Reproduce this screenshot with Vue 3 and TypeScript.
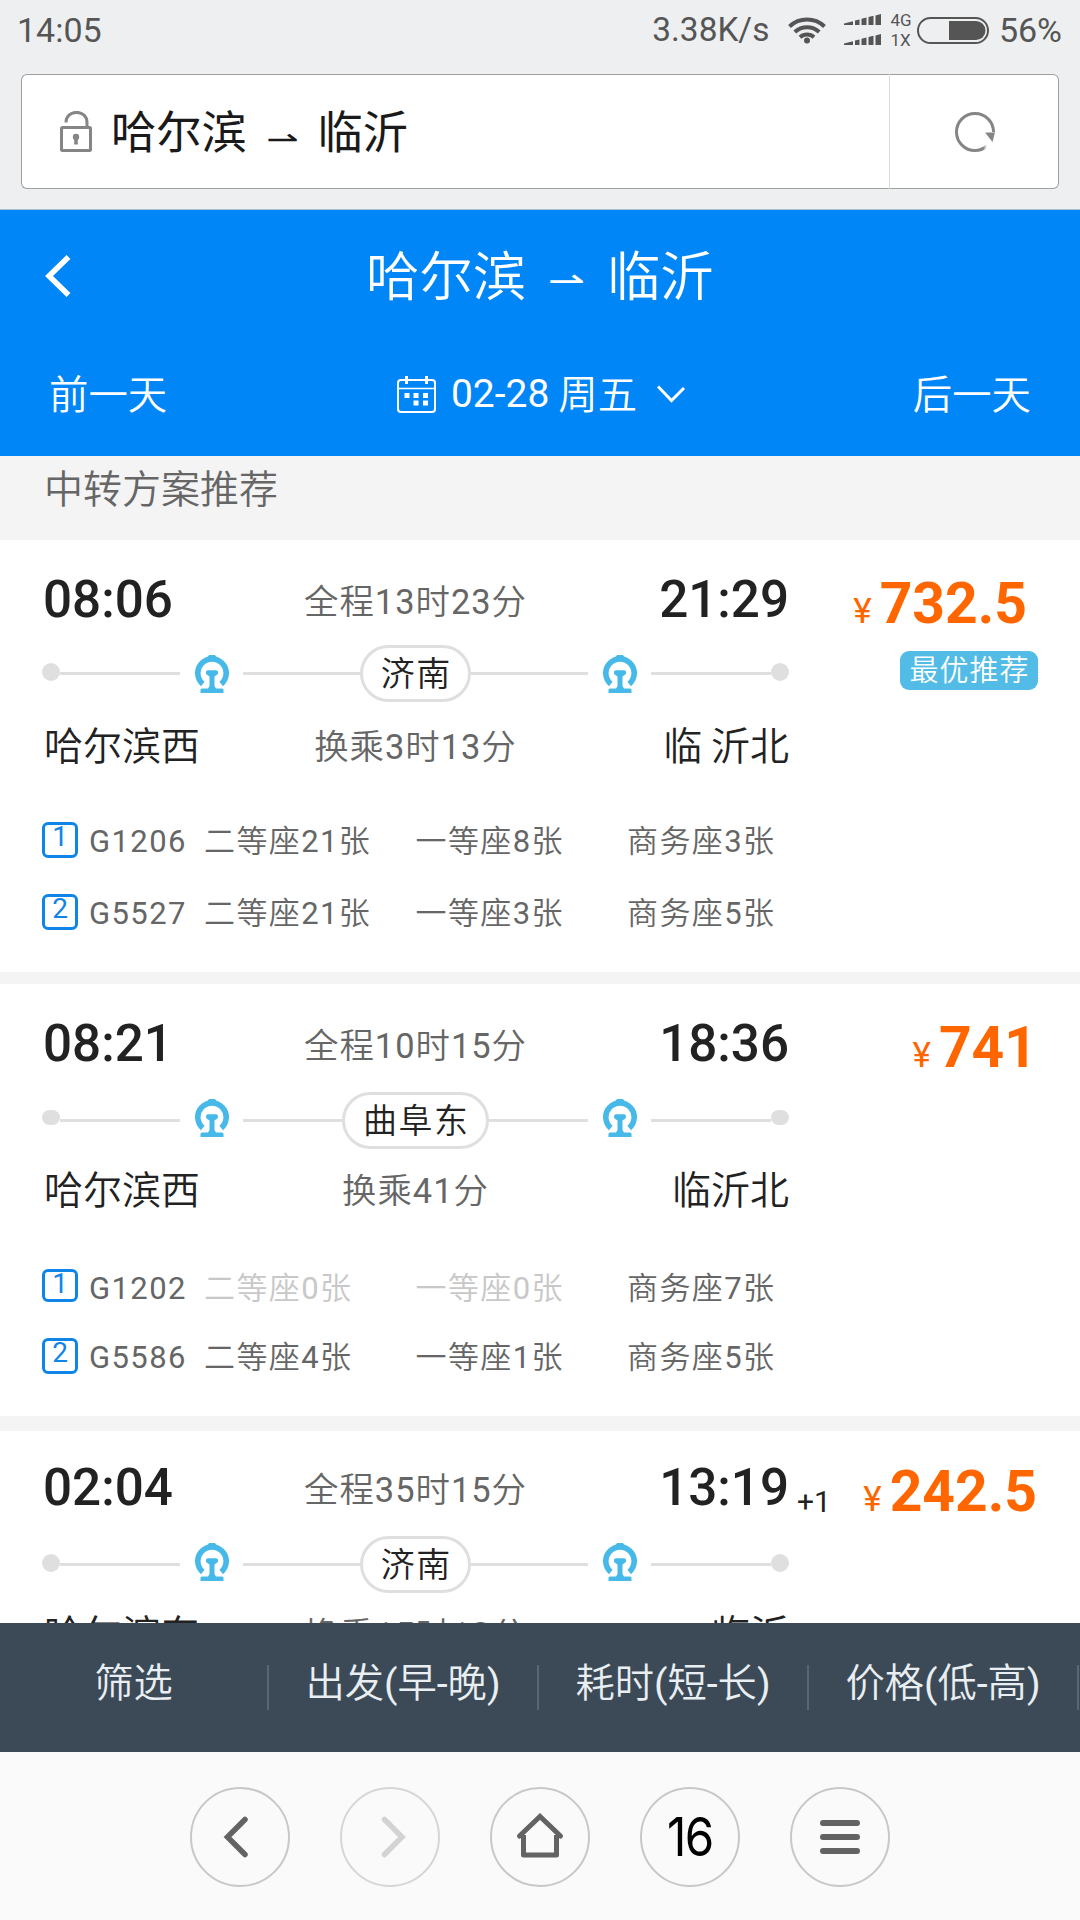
<script setup lang="ts">
interface Seat {
  label: string
  count: number
}

interface Leg {
  code: string
  seats: Seat[]
}

interface Plan {
  id: string
  depart: string
  arrive: string
  dayOffset?: string
  total: string
  via: string
  transfer: string
  from: string
  to: string
  price: string
  tag?: string
  legs: Leg[]
}

const seats = (second: number, first: number, business: number): Seat[] => [
  { label: '二等座', count: second },
  { label: '一等座', count: first },
  { label: '商务座', count: business },
]

const plans: Plan[] = [
  {
    id: 'p1',
    depart: '08:06',
    arrive: '21:29',
    total: '全程13时23分',
    via: '济南',
    transfer: '换乘3时13分',
    from: '哈尔滨西',
    to: '临 沂北',
    price: '732.5',
    tag: '最优推荐',
    legs: [
      { code: 'G1206', seats: seats(21, 8, 3) },
      { code: 'G5527', seats: seats(21, 3, 5) },
    ],
  },
  {
    id: 'p2',
    depart: '08:21',
    arrive: '18:36',
    total: '全程10时15分',
    via: '曲阜东',
    transfer: '换乘41分',
    from: '哈尔滨西',
    to: '临沂北',
    price: '741',
    legs: [
      { code: 'G1202', seats: seats(0, 0, 7) },
      { code: 'G5586', seats: seats(4, 1, 5) },
    ],
  },
  {
    id: 'p3',
    depart: '02:04',
    arrive: '13:19',
    dayOffset: '+1',
    total: '全程35时15分',
    via: '济南',
    transfer: '换乘15时13分',
    from: '哈尔滨东',
    to: '临沂',
    price: '242.5',
    legs: [],
  },
]

const filters = ['筛选', '出发(早-晚)', '耗时(短-长)', '价格(低-高)']
</script>

<template>
  <div class="screen">
    <div class="status">
      <span class="clock">14:05</span>
      <span class="speed">3.38K/s</span>
      <svg class="wifi" width="38" height="28" viewBox="0 0 38 28" fill="none" stroke="#555" stroke-width="4">
        <path d="M1.5 10.5a25.500 25.500 0 0 1 35 0" />
        <path d="M6.800 16a18 18 0 0 1 24.400 0" />
        <path d="M12 21.200a10.500 10.500 0 0 1 14 0" />
        <circle cx="19" cy="24.500" r="3" fill="#555" stroke="none" />
      </svg>
      <svg class="signal" width="38" height="32" viewBox="0 0 38 32" fill="#555">
        <path d="M0 11v-1.500l9-2.200V11zM11 11V6.500l4.500-1V11zM17.500 11V4.800l5-1.300V11zM24.500 11V3l5-1.200V11zM31.500 11V1.400L37 0v11z" />
        <path d="M0 31v-1.500l9-2.200V31zM11 31v-4.500l4.500-1V31zM17.500 31v-6.200l5-1.300V31zM24.500 31v-8l5-1.200V31zM31.500 31v-9.600L37 20v11z" />
      </svg>
      <span class="net"><span>4G</span><span>1X</span></span>
      <svg class="battery" width="72" height="27" viewBox="0 0 72 27">
        <rect x="1" y="1" width="70" height="25" rx="12.500" fill="none" stroke="#555" stroke-width="2" />
        <path d="M32 4h27a9.500 9.500 0 0 1 0 19H32z" fill="#555" />
      </svg>
      <span class="percent">56%</span>
    </div>

    <div class="address">
      <div class="url">
        <svg class="lock" width="32" height="41" viewBox="0 0 32 41" fill="none" stroke="#858585">
          <path d="M6 11.500C6 -2 27 -2 27 11.500V16" stroke-width="3" />
          <rect x="1.500" y="16.500" width="29" height="23" rx="1" stroke-width="3" />
          <circle cx="16" cy="26" r="3.200" fill="#858585" stroke="none" />
          <path d="M16 26v7.500" stroke-width="3.600" />
        </svg>
        <span class="url-text">哈尔滨</span>
        <span class="harpoon dark">⇀</span>
        <span class="url-text">临沂</span>
      </div>
      <div class="reload">
        <svg width="42" height="42" viewBox="0 0 42 42" fill="none">
          <defs>
            <linearGradient id="fade" x1="0" y1="0" x2="1" y2="0">
              <stop offset="0.700" stop-color="#858585" />
              <stop offset="1" stop-color="#858585" stop-opacity="0" />
            </linearGradient>
          </defs>
          <path d="M39.500 21A18.500 18.500 0 1 0 21 39.500" stroke="#858585" stroke-width="3" />
          <path d="M20.500 39.500A18.500 18.500 0 0 0 33 35" stroke="url(#fade)" stroke-width="3" />
          <path d="M31 21.500h10l-2.500 9.500z" fill="#858585" />
        </svg>
      </div>
    </div>

    <header class="header">
      <div class="title-row">
        <svg class="back" width="26" height="42" viewBox="0 0 26 42" fill="none" stroke="#fff" stroke-width="5.500">
          <path d="M23.500 2L4 21l19.500 19" />
        </svg>
        <div class="title">
          <span>哈尔滨</span>
          <span class="harpoon">⇀</span>
          <span>临沂</span>
        </div>
      </div>
      <div class="date-row">
        <span class="cjk">前一天</span>
        <div class="date">
          <svg width="40" height="37" viewBox="0 0 40 37" fill="none" stroke="#fff" stroke-width="2">
            <rect x="1" y="4" width="37" height="32" rx="3" />
            <path d="M1 12.500h37" stroke-width="1.600" />
            <path d="M9.500 0v8M29.500 0v8" stroke-width="3" />
            <path d="M7.500 19.500h5M16.500 19.500h5M26 19.500h5M16.500 27h5M26 27h5" stroke-width="5" />
          </svg>
          <span class="date-num">02-28</span>
          <span class="cjk week">周五</span>
          <svg class="caret" width="28" height="18" viewBox="0 0 28 18" fill="none" stroke="#fff" stroke-width="3">
            <path d="M1 1.500l13.500 14L27 3" />
          </svg>
        </div>
        <span class="cjk">后一天</span>
      </div>
    </header>

    <main class="list">
      <h2 class="section">中转方案推荐</h2>
      <article v-for="plan in plans" :key="plan.id" class="card" :class="plan.id">
        <div class="journey">
          <div class="head">
            <span class="time">{{ plan.depart }}</span>
            <span class="muted">{{ plan.total }}</span>
            <span class="time end">{{ plan.arrive }}</span>
          </div>
          <div class="track">
            <i class="dot" />
            <i class="line edge" />
            <svg class="train" width="34" height="38" viewBox="0 0 34 38" fill="#47b9e9">
              <path d="M7.800 29A14.200 14.200 0 1 1 26.200 29" fill="none" stroke="#47b9e9" stroke-width="5.600" />
              <path d="M14 0h6l3 4H11zM13 15.200h8a2 2 0 0 1 2 2v.800a2 2 0 0 1-1 1.700l-2.500 1.800V31l1.500 2.500H27a1.500 1.500 0 0 1 1.500 1.500V38h-23v-3A1.500 1.500 0 0 1 7 33.500h6l1.500-2.500V21.500L12 19.700a2 2 0 0 1-1-1.700v-.800a2 2 0 0 1 2-2z" />
            </svg>
            <i class="line" />
            <span class="via">{{ plan.via }}</span>
            <i class="line" />
            <svg class="train" width="34" height="38" viewBox="0 0 34 38" fill="#47b9e9">
              <path d="M7.800 29A14.200 14.200 0 1 1 26.200 29" fill="none" stroke="#47b9e9" stroke-width="5.600" />
              <path d="M14 0h6l3 4H11zM13 15.200h8a2 2 0 0 1 2 2v.800a2 2 0 0 1-1 1.700l-2.500 1.800V31l1.500 2.500H27a1.500 1.500 0 0 1 1.500 1.500V38h-23v-3A1.500 1.500 0 0 1 7 33.500h6l1.500-2.500V21.500L12 19.700a2 2 0 0 1-1-1.700v-.800a2 2 0 0 1 2-2z" />
            </svg>
            <i class="line edge" />
            <i class="dot" />
          </div>
          <div class="stations">
            <span class="station">{{ plan.from }}</span>
            <span class="muted">{{ plan.transfer }}</span>
            <span class="station end">{{ plan.to }}</span>
          </div>
          <div class="legs">
            <div v-for="(leg, i) in plan.legs" :key="leg.code" class="leg">
              <span class="badge">{{ i + 1 }}</span>
              <span class="code">{{ leg.code }}</span>
              <span
                v-for="seat in leg.seats"
                :key="seat.label"
                class="seat"
                :class="{ none: seat.count === 0 }"
              >{{ seat.label }}{{ seat.count }}张</span>
            </div>
          </div>
        </div>
        <div class="fare">
          <div class="fare-row">
            <span v-if="plan.dayOffset" class="offset">{{ plan.dayOffset }}</span>
            <span class="price"><span class="yen">¥</span>{{ plan.price }}</span>
          </div>
          <span v-if="plan.tag" class="tag">{{ plan.tag }}</span>
        </div>
      </article>
    </main>

    <div class="filters">
      <div v-for="filter in filters" :key="filter" class="filter">{{ filter }}</div>
    </div>

    <nav class="browser">
      <span class="btn">
        <svg width="50" height="50" viewBox="0 0 50 50" fill="none" stroke="#636363" stroke-width="5.500" stroke-linecap="round">
          <path d="M30 7.500L12.500 25 30 42.500" />
        </svg>
      </span>
      <span class="btn off">
        <svg width="50" height="50" viewBox="0 0 50 50" fill="none" stroke="#d3d3d3" stroke-width="5.500" stroke-linecap="round">
          <path d="M19.500 7.500L37 25 19.500 42.500" />
        </svg>
      </span>
      <span class="btn">
        <svg width="50" height="50" viewBox="0 0 50 50" fill="none" stroke="#636363" stroke-width="5" stroke-linecap="round">
          <path d="M4.500 24L25 4.500 45.500 24" />
          <path d="M8.500 23v20h33V23" stroke-linecap="butt" stroke-linejoin="round" />
        </svg>
      </span>
      <span class="btn tabs"><span class="count">16</span></span>
      <span class="btn">
        <svg width="50" height="50" viewBox="0 0 50 50" stroke="#636363" stroke-width="6" stroke-linecap="round">
          <path d="M8 11h34M8 25h34M8 39h34" />
        </svg>
      </span>
    </nav>
  </div>
</template>

<style>
body {
  margin: 0;
}
</style>

<style scoped>
.screen {
  width: 1080px;
  height: 1920px;
  overflow: hidden;
  display: flex;
  flex-direction: column;
  background: #f4f4f4;
  color: #222;
  font-family: Roboto, "Noto Sans CJK SC DemiLight", "Noto Sans CJK SC", sans-serif;
}

.cjk,
.title,
.section,
.station,
.via,
.tag {
  font-family: "Noto Sans CJK SC", sans-serif;
  font-weight: 350;
}

/* status bar */
.status {
  flex: none;
  display: flex;
  align-items: center;
  height: 60px;
  padding: 0 18px 0 17px;
  background: #eeeff1;
  color: #555;
  font-size: 34px;
  line-height: 60px;
}
.speed {
  margin-left: auto;
  font-size: 33.400px;
}
.wifi {
  margin-left: 19px;
}
.signal {
  margin-left: 18px;
}
.net {
  display: flex;
  flex-direction: column;
  width: 27px;
  margin-left: 8px;
  font-size: 17px;
  line-height: 20px;
}
.battery {
  flex: none;
}
.percent {
  margin-left: 9.500px;
  font-size: 34px;
}

/* address bar */
.address {
  flex: none;
  display: flex;
  height: 150px;
  box-sizing: border-box;
  padding: 14px 21px 20px;
  border-bottom: 1px solid #a9bfd0;
  background: #eeeff1;
}
.url,
.reload {
  box-sizing: border-box;
  border: 1px solid #9fa0a1;
  background: #fff;
}
.url {
  flex: 1;
  display: flex;
  align-items: center;
  padding-left: 38px;
  border-right: 0;
  border-radius: 6px 0 0 6px;
  color: #1a1a1a;
  font-family: "Noto Sans CJK SC", sans-serif;
  font-size: 45.300px;
}
.url-text {
  height: 60px;
  margin-bottom: 5px;
  line-height: 60px;
}
.reload {
  display: flex;
  align-items: center;
  justify-content: center;
  width: 170px;
  padding-left: 2px;
  border-left-color: #dcdcdc;
  border-radius: 0 6px 6px 0;
}
.lock {
  margin-right: 19px;
}
.harpoon {
  font-family: "DejaVu Sans", sans-serif;
  font-weight: 400;
  font-size: 39px;
  line-height: 1;
  transform: scale(1.14, 0.850);
}
.harpoon.dark {
  margin: 14px 21px 0 21px;
  font-size: 34px;
}

/* page header */
.header {
  flex: none;
  height: 246px;
  background: #0086f6;
  color: #fff;
}
.title-row {
  display: flex;
  align-items: center;
  height: 126px;
  padding-left: 45px;
}
.back {
  margin-top: 6px;
}
.title {
  display: flex;
  align-items: center;
  margin-left: 295px;
  font-size: 53.400px;
  line-height: 126px;
}
.title .harpoon {
  margin: 14px 24px 0;
}
.date-row {
  display: flex;
  align-items: center;
  justify-content: space-between;
  height: 116px;
  padding: 0 49px;
  font-size: 39.400px;
  line-height: 60px;
}
.date-row .cjk {
  height: 60px;
  margin-bottom: 4px;
}
.date {
  display: flex;
  align-items: center;
  padding-left: 2px;
}
.date-num {
  margin-left: 14px;
  font-size: 39px;
}
.week {
  margin-left: 9px;
}
.caret {
  margin-left: 20px;
}

/* plan list */
.list {
  flex: none;
  height: 1167px;
  overflow: hidden;
}
.section {
  height: 84px;
  margin: 0;
  padding-left: 44px;
  color: #666;
  font-size: 39px;
  line-height: 60px;
}
.card {
  display: flex;
  height: 432px;
  box-sizing: border-box;
  padding: 34px 0 0 42px;
  margin-bottom: 12px;
  background: #fff;
}
.card.p2 {
  margin-bottom: 15px;
}
.card.p3 {
  padding-top: 31px;
}
.journey {
  flex: none;
  width: 747px;
}
.head,
.stations {
  display: grid;
  grid-template-columns: 1fr auto 1fr;
  align-items: center;
  white-space: nowrap;
}
.head {
  height: 52px;
}
.time {
  padding: 0 0 0 1px;
  font-size: 51.200px;
  font-weight: 500;
  line-height: 52px;
}
.end {
  text-align: right;
}
.muted {
  color: #666;
  font-size: 34.400px;
  letter-spacing: 1px;
  line-height: 48px;
}
.head .muted {
  padding-top: 4px;
}
.track {
  display: flex;
  align-items: center;
  height: 57px;
  margin: 19px 0 21px;
}
.p2 .track,
.p3 .track {
  margin: 22px 0 18px;
}
.dot {
  width: 18px;
  height: 18px;
  margin-bottom: 3px;
  border-radius: 9px;
  background: #dfdfdf;
}
.p2 .dot {
  height: 15px;
  margin-bottom: 6px;
}
.line {
  flex: 1;
  height: 3px;
  background: #dfdfdf;
}
.line.edge {
  flex: none;
  width: 120px;
}
.train {
  margin: 0 14.500px;
}
.p2 .train,
.p3 .train {
  margin-bottom: 5px;
}
.via {
  box-sizing: border-box;
  height: 57px;
  padding: 0 16.500px 0 18px;
  border: 3px solid #dfdfdf;
  border-radius: 29px;
  font-size: 34px;
  letter-spacing: 1.500px;
  line-height: 48px;
}
.stations {
  height: 40px;
}
.station {
  font-size: 39px;
  line-height: 40px;
  padding: 0 0 0 2px;
}
.stations .muted {
  padding-top: 8px;
  line-height: 30px;
}
.legs {
  display: flex;
  flex-direction: column;
  gap: 36px;
  margin-top: 59px;
}
.leg {
  display: flex;
  align-items: center;
  height: 36px;
  color: #666;
  font-size: 31px;
  letter-spacing: 1.400px;
  line-height: 36px;
  white-space: nowrap;
}
.badge {
  flex: none;
  width: 36px;
  height: 36px;
  box-sizing: border-box;
  border: 3px solid #0f85e8;
  border-radius: 6px;
  color: #0f85e8;
  font-size: 28px;
  letter-spacing: 0;
  line-height: 24px;
  text-align: center;
}
.p2 .legs {
  gap: 33px;
  margin-top: 62px;
}
.p2 .leg:first-child .badge {
  height: 33px;
  margin-bottom: 3px;
}
.code,
.seat {
  flex: none;
  padding-top: 4px;
}
.code {
  width: 115px;
  margin-left: 11px;
}
.seat {
  width: 211.500px;
}
.seat.none {
  color: #c8c8c8;
}
.fare {
  flex: 1;
  display: flex;
  flex-direction: column;
  align-items: flex-end;
  padding-right: 42px;
}
.fare-row {
  display: flex;
  width: 100%;
  height: 83px;
}
.offset {
  margin-left: 8px;
  font-size: 30px;
  line-height: 80px;
}
.price {
  margin-left: auto;
  padding-right: 11px;
  color: #ff6600;
  font-size: 57px;
  font-weight: 700;
  line-height: 60px;
}
.p2 .price {
  padding-right: 1px;
}
.p3 .price {
  padding-right: 1px;
}
.yen {
  margin-right: 8px;
  font-size: 35px;
  font-weight: 400;
}
.tag {
  margin-top: -6px;
  height: 39px;
  padding: 0 8.500px 0 9.500px;
  border-radius: 9px;
  background: #52bbe6;
  color: #fff;
  font-size: 29px;
  letter-spacing: 1px;
  line-height: 35px;
}

/* filter bar */
.filters {
  flex: none;
  display: flex;
  height: 129px;
  background: #3b4a56;
  color: #e9eef2;
}
.filter {
  flex: none;
  width: 270px;
  height: 45px;
  box-sizing: border-box;
  margin-top: 42px;
  border-right: 2px solid #586672;
  font-size: 39.300px;
  line-height: 39px;
  text-align: center;
  white-space: nowrap;
}
.filter:first-child {
  width: 269px;
}

/* browser toolbar */
.browser {
  flex: 1;
  display: flex;
  align-items: center;
  justify-content: center;
  gap: 50px;
  padding-top: 2px;
  background: #fafafa;
}
.btn {
  display: flex;
  align-items: center;
  justify-content: center;
  width: 100px;
  height: 100px;
  box-sizing: border-box;
  border: 2px solid #c8c8c8;
  border-radius: 50%;
}
.btn.off {
  border-color: #d6d6d6;
}
.tabs {
  color: #000;
  font-family: Inter, sans-serif;
  font-size: 54px;
}
.count {
  letter-spacing: -2px;
  line-height: 60px;
  transform: scaleX(0.880);
}
</style>
